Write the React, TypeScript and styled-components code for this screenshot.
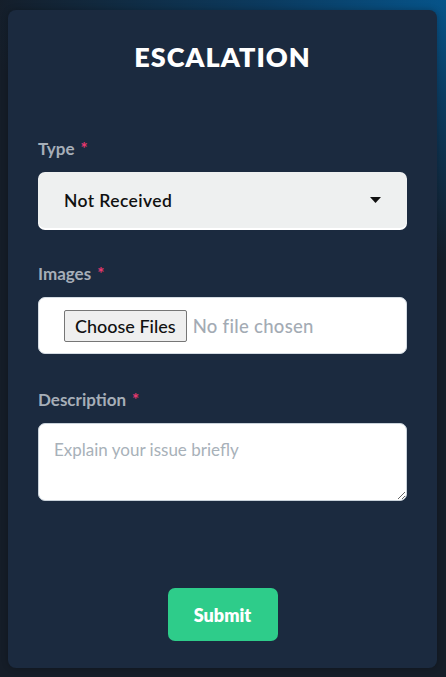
import React from 'react';
import styled, { createGlobalStyle } from 'styled-components';

const GlobalStyle = createGlobalStyle`
  html, body {
    margin: 0;
    padding: 0;
  }
  body {
    font-family: Lato, "Open Sans", sans-serif;
    background: #151d28;
  }
`;

const Page = styled.div`
  min-height: 100vh;
  box-sizing: border-box;
  padding: 10px 9px 9px 8px;
  background:
    radial-gradient(ellipse 460px 260px at 100% 0%, #06548a 0%, #0b3b60 38%, rgba(21, 29, 40, 0) 100%),
    #151d28;
`;

const Card = styled.div`
  box-sizing: border-box;
  height: 658px;
  background: #1b2a3f;
  border-radius: 8px;
  padding: 31px 30px 27px;
  display: flex;
  flex-direction: column;
  box-shadow: 0 0 6px rgba(0, 0, 0, 0.25);
`;

const Title = styled.h2`
  margin: 0;
  text-align: center;
  color: #ffffff;
  font-size: 27px;
  line-height: 32px;
  font-weight: 800;
  letter-spacing: 1px;
`;

const Form = styled.form`
  display: flex;
  flex-direction: column;
  flex: 1;
  margin-top: 65px;
`;

const Field = styled.div`
  display: flex;
  flex-direction: column;
  gap: 12px;
  margin-bottom: 35px;
`;

const Label = styled.label`
  color: #a6aeb8;
  font-size: 17px;
  line-height: 22px;
  font-weight: 700;
`;

const Required = styled.span`
  color: #e8386f;
  margin-left: 6px;
`;

const SelectWrap = styled.div`
  position: relative;
`;

const Select = styled.select`
  appearance: none;
  width: 100%;
  height: 56px;
  box-sizing: border-box;
  border: none;
  border-radius: 7px;
  background: #eef0f0;
  box-shadow: 0 2px 0 #ffffff;
  padding: 0 26px;
  font-family: inherit;
  font-size: 17.5px;
  font-weight: 600;
  letter-spacing: 0.4px;
  color: #111111;
  outline: none;
`;

const Caret = styled.svg`
  position: absolute;
  right: 26px;
  top: 25px;
  pointer-events: none;
`;

const FileBox = styled.div`
  height: 57px;
  box-sizing: border-box;
  background: #ffffff;
  border: 1px solid #d4dbe2;
  border-radius: 7px;
  display: flex;
  align-items: center;
  padding-left: 25px;
`;

const FileButton = styled.span`
  box-sizing: border-box;
  height: 32px;
  padding: 0 10px;
  display: flex;
  align-items: center;
  background: #efefef;
  border: 1px solid #767676;
  border-radius: 2px;
  font-size: 18px;
  color: #111111;
  font-weight: 500;
`;

const FileStatus = styled.span`
  margin-left: 6px;
  font-size: 18.5px;
  color: #a3abb4;
  font-weight: 500;
  letter-spacing: 0.3px;
`;

const TextArea = styled.textarea`
  height: 78px;
  box-sizing: border-box;
  border: 1px solid #c9d2da;
  border-radius: 7px;
  background: #ffffff;
  padding: 15px 15px;
  font-family: inherit;
  font-size: 17px;
  resize: vertical;
  outline: none;
  &::placeholder {
    color: #a8b1b9;
  }
`;

const Actions = styled.div`
  margin-top: auto;
  display: flex;
  justify-content: center;
`;

const SubmitButton = styled.button`
  width: 110px;
  height: 53px;
  border: none;
  border-radius: 7px;
  background: #2ecc8a;
  color: #ffffff;
  font-family: inherit;
  font-size: 18px;
  font-weight: 800;
  cursor: pointer;
`;

export default function App() {
  return (
    <>
      <GlobalStyle />
      <Page>
        <Card>
          <Title>ESCALATION</Title>
          <Form onSubmit={(e) => e.preventDefault()}>
            <Field>
              <Label>
                Type<Required>*</Required>
              </Label>
              <SelectWrap>
                <Select defaultValue="not-received">
                  <option value="not-received">Not Received</option>
                  <option value="damaged">Damaged</option>
                  <option value="other">Other</option>
                </Select>
                <Caret width="11" height="6" viewBox="0 0 11 6">
                  <path d="M0 0h11L5.5 6z" fill="#111" />
                </Caret>
              </SelectWrap>
            </Field>
            <Field>
              <Label>
                Images<Required>*</Required>
              </Label>
              <FileBox>
                <FileButton>Choose Files</FileButton>
                <FileStatus>No file chosen</FileStatus>
              </FileBox>
            </Field>
            <Field>
              <Label>
                Description<Required>*</Required>
              </Label>
              <TextArea placeholder="Explain your issue briefly" />
            </Field>
            <Actions>
              <SubmitButton type="submit">Submit</SubmitButton>
            </Actions>
          </Form>
        </Card>
      </Page>
    </>
  );
}
